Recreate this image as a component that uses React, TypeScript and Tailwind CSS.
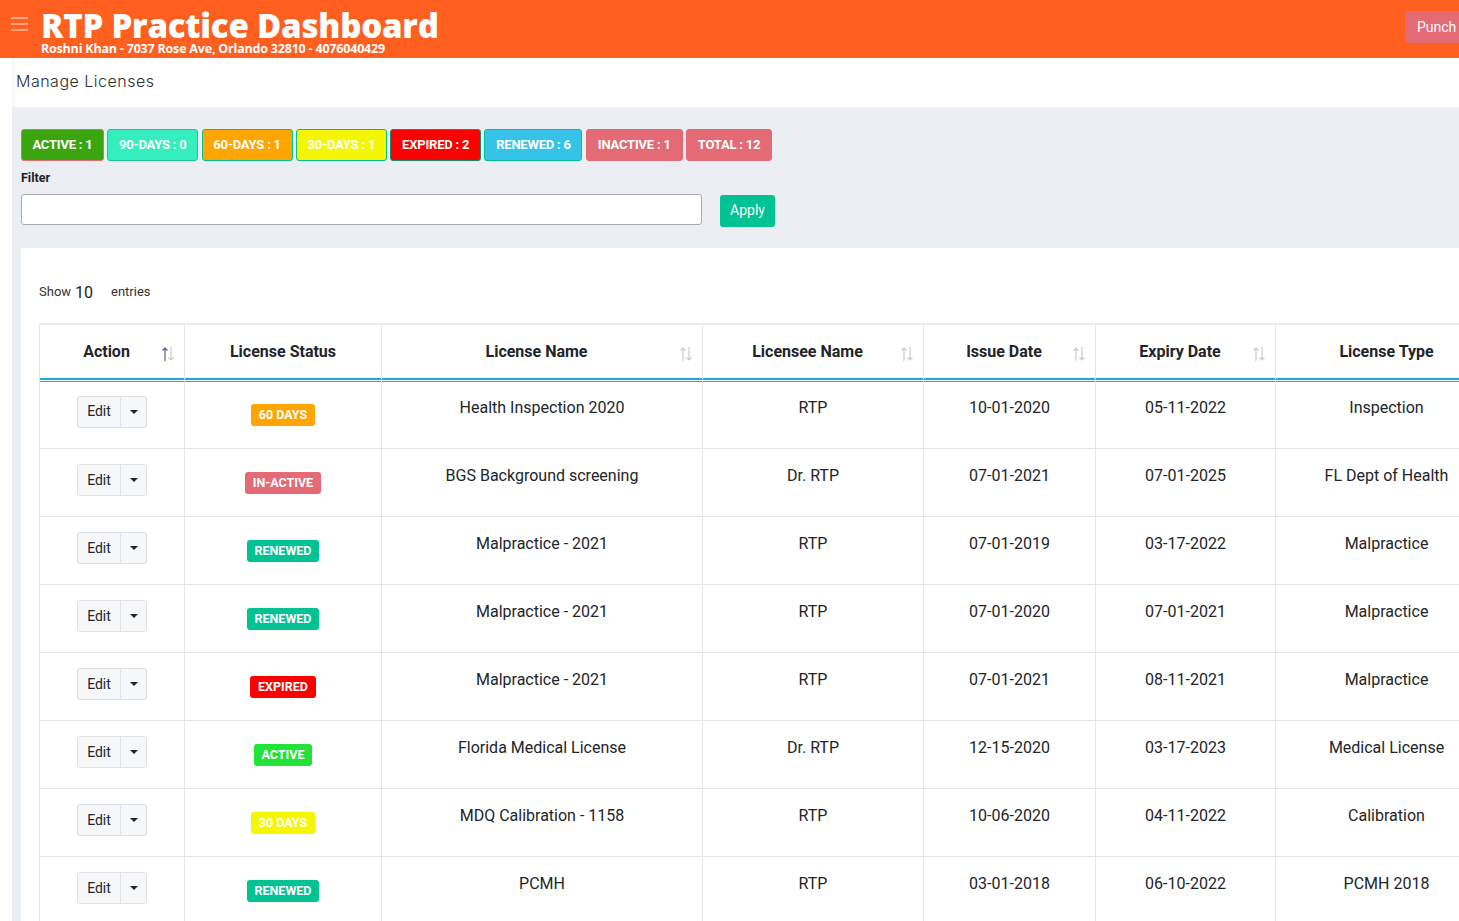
import React from "react";

const pills = [
  { t: "ACTIVE : 1", c: "bg-[#3aa50f] border-[#e46a76]", w: "w-[83px]" },
  { t: "90-DAYS : 0", c: "bg-[#35eebd] border-[#1fc59a]", w: "w-[91px]" },
  { t: "60-DAYS : 1", c: "bg-[#ffa500] border-[#00c292]", w: "w-[91px]" },
  { t: "30-DAYS : 1", c: "bg-[#f5f700] border-[#00c292]", w: "w-[91px]" },
  { t: "EXPIRED : 2", c: "bg-[#ff0000] border-[#1a8a70]", w: "w-[91px]" },
  { t: "RENEWED : 6", c: "bg-[#36c3ea] border-[#00c292]", w: "w-[98px]" },
  { t: "INACTIVE : 1", c: "bg-[#e46a76] border-[#e46a76]", w: "w-[97px]" },
  { t: "TOTAL : 12", c: "bg-[#e46a76] border-[#e46a76]", w: "w-[86px]" },
];

type Row = { status: string; sc: string; name: string; lic: string; issue: string; exp: string; type: string };
const rows: Row[] = [
  { status: "60 DAYS", sc: "bg-[#ffa500]", name: "Health Inspection 2020", lic: "RTP", issue: "10-01-2020", exp: "05-11-2022", type: "Inspection" },
  { status: "IN-ACTIVE", sc: "bg-[#e46a76]", name: "BGS Background screening", lic: "Dr. RTP", issue: "07-01-2021", exp: "07-01-2025", type: "FL Dept of Health" },
  { status: "RENEWED", sc: "bg-[#00c292]", name: "Malpractice - 2021", lic: "RTP", issue: "07-01-2019", exp: "03-17-2022", type: "Malpractice" },
  { status: "RENEWED", sc: "bg-[#00c292]", name: "Malpractice - 2021", lic: "RTP", issue: "07-01-2020", exp: "07-01-2021", type: "Malpractice" },
  { status: "EXPIRED", sc: "bg-[#ff0000]", name: "Malpractice - 2021", lic: "RTP", issue: "07-01-2021", exp: "08-11-2021", type: "Malpractice" },
  { status: "ACTIVE", sc: "bg-[#22e33a]", name: "Florida Medical License", lic: "Dr. RTP", issue: "12-15-2020", exp: "03-17-2023", type: "Medical License" },
  { status: "30 DAYS", sc: "bg-[#f5f700]", name: "MDQ Calibration - 1158", lic: "RTP", issue: "10-06-2020", exp: "04-11-2022", type: "Calibration" },
  { status: "RENEWED", sc: "bg-[#00c292]", name: "PCMH", lic: "RTP", issue: "03-01-2018", exp: "06-10-2022", type: "PCMH 2018" },
];

function SortIcon({ active = false }: { active?: boolean }) {
  return (
    <svg width="16" height="18" viewBox="0 0 16 18" className="shrink-0">
      <g fill="none" strokeWidth="1.2">
        <path d="M5 16V3M2.5 5.5L5 3l2.5 2.5" stroke={active ? "#6b4fa0" : "#c8cbd0"} />
        <path d="M11 2v13M8.5 12.5L11 15l2.5-2.5" stroke="#c8cbd0" />
      </g>
    </svg>
  );
}

const cols = [
  { t: "Action", w: "w-[145px]", sort: true, active: true },
  { t: "License Status", w: "w-[197px]", sort: false },
  { t: "License Name", w: "w-[321px]", sort: true },
  { t: "Licensee Name", w: "w-[221px]", sort: true },
  { t: "Issue Date", w: "w-[172px]", sort: true },
  { t: "Expiry Date", w: "w-[180px]", sort: true },
  { t: "License Type", w: "w-[222px]", sort: false },
];

export default function App() {
  return (
    <div className="w-[1459px] h-[921px] overflow-hidden bg-white font-['Roboto',sans-serif] text-[#212529]">
      {/* Top bar */}
      <div className="h-[58px] bg-[#ff5f1f] flex items-start relative">
        <div className="pl-[11px] pt-[17px] w-[41px]">
          <div className="flex flex-col gap-[4.5px] w-[17px]">
            <div className="h-[1.5px] bg-[#ffa585]" />
            <div className="h-[1.5px] bg-[#ffa585]" />
            <div className="h-[1.5px] bg-[#ffa585]" />
          </div>
        </div>
        <div className="flex flex-col">
          <div className="text-white font-['Open_Sans',sans-serif] font-extrabold text-[33px] leading-[30px] mt-[11px] tracking-[-0.2px]">
            RTP Practice Dashboard
          </div>
          <div className="text-white font-['Open_Sans',sans-serif] font-bold text-[12.5px] leading-[13px] mt-[1px] tracking-[-0.2px]">
            Roshni Khan - 7037 Rose Ave, Orlando 32810 - 4076040429
          </div>
        </div>
        <div className="absolute left-[1405px] top-[11px] h-[32px] w-[80px] rounded-[4px] bg-[#e46a76] text-white text-[14px] flex items-center pl-[12px]">
          Punch Out
        </div>
      </div>

      <div className="flex h-[863px]">
        <div className="w-[12px] bg-white shrink-0" />
        <div className="flex-1 flex flex-col bg-[#ebeef3]">
          <div className="h-[49px] bg-white flex items-center pl-[4px] shadow-[inset_6px_0_6px_-6px_rgba(0,0,0,0.08)]">
            <span className="font-['Inter',sans-serif] font-light text-[16px] text-[#2b2f36] tracking-[0.5px] mt-[-3px]">Manage Licenses</span>
          </div>
          <div className="pl-[9px] pt-[22px]">
            <div className="flex gap-[3.3px]">
              {pills.map((p) => (
                <div key={p.t} className={`${p.w} ${p.c} h-[32px] border rounded-[3px] text-white font-bold text-[13px] flex items-center justify-center tracking-[-0.2px]`}>
                  {p.t}
                </div>
              ))}
            </div>
            <div className="mt-[8px] text-[12.5px] font-bold text-[#222]">Filter</div>
            <div className="mt-[5px] flex items-center gap-[18px]">
              <div className="w-[681px] h-[31px] bg-white border border-[#a9abb0] rounded-[3px]" />
              <div className="w-[55px] h-[32px] bg-[#00c292] rounded-[3px] text-white text-[14px] flex items-center justify-center mt-[2px]">Apply</div>
            </div>
          </div>
          <div className="mt-[21px] ml-[9px] flex-1 bg-white pl-[18px] overflow-hidden">
            <div className="pt-[35px] flex items-end h-[54px] text-[13px] text-[#333]">
              <span>Show</span>
              <span className="text-[16px] ml-[4px] text-[#222] leading-[19px]">10</span>
              <span className="ml-[18px]">entries</span>
            </div>
            <div className="mt-[21px] w-[1500px]">
              <table className="border-collapse table-fixed w-[1458px]">
                <thead>
                  <tr className="border-t-[2px] border-[#e9ebee]">
                    {cols.map((c, i) => (
                      <th key={c.t} className={`${c.w} h-[57px] p-0 border-[#e3e6ea] ${i === 0 ? "border-l" : ""} border-r font-bold text-[16px] text-[#212529] relative`}>
                        <div className={`flex items-center justify-center h-full ${c.sort ? "pr-[11px]" : ""}`}>
                          <span className="mt-[-1px]">{c.t}</span>
                        </div>
                        {c.sort && (
                          <div className="absolute right-[8px] top-[20px]">
                            <SortIcon active={c.active} />
                          </div>
                        )}
                        <div className="absolute left-0 right-0 bottom-[-1px] h-[4px] border-t-[2px] border-b-[1.5px] border-[#19a9e8]" />
                      </th>
                    ))}
                  </tr>
                </thead>
                <tbody>
                  {rows.map((r, i) => (
                    <tr key={i} className="h-[68px] border-b border-[#e3e6ea]">
                      <td className="border-l border-r border-[#e3e6ea] align-top p-0">
                        <div className="flex justify-center pt-[15px]">
                          <div className="flex h-[32px] border border-[#dfe2e6] rounded-[3px] bg-[#f6f7f9]">
                            <div className="w-[43px] flex items-center justify-center text-[14px] text-[#212529] border-r border-[#dfe2e6]">Edit</div>
                            <div className="w-[25px] flex items-center justify-center">
                              <div className="w-0 h-0 border-l-[4px] border-r-[4px] border-t-[4px] border-l-transparent border-r-transparent border-t-[#212529]" />
                            </div>
                          </div>
                        </div>
                      </td>
                      <td className="border-r border-[#e3e6ea] align-top p-0">
                        <div className="flex justify-center pt-[23px]">
                          <span className={`${r.sc} text-white font-bold text-[12.5px] px-[8px] h-[22px] leading-[22px] rounded-[3px]`}>{r.status}</span>
                        </div>
                      </td>
                      <td className="border-r border-[#e3e6ea] align-top text-center pt-[15px] text-[16px]">{r.name}</td>
                      <td className="border-r border-[#e3e6ea] align-top text-center pt-[15px] text-[16px]">{r.lic}</td>
                      <td className="border-r border-[#e3e6ea] align-top text-center pt-[15px] text-[16px]">{r.issue}</td>
                      <td className="border-r border-[#e3e6ea] align-top text-center pt-[15px] text-[16px]">{r.exp}</td>
                      <td className="border-r border-[#e3e6ea] align-top text-center pt-[15px] text-[16px]">{r.type}</td>
                    </tr>
                  ))}
                </tbody>
              </table>
            </div>
          </div>
        </div>
      </div>
    </div>
  );
}
